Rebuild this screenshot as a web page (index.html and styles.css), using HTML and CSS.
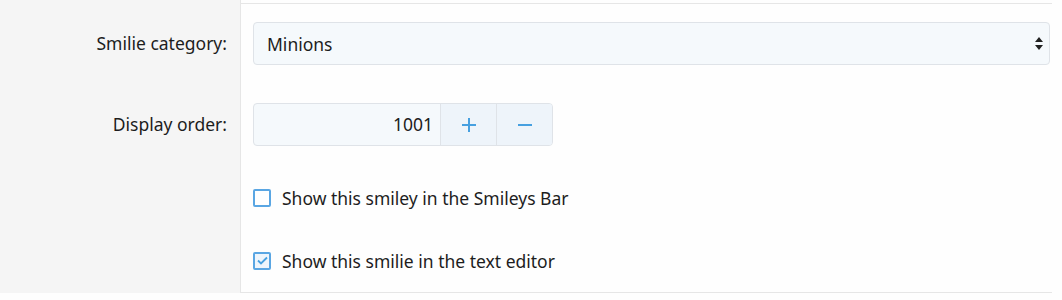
FILE: index.html
```html
<!DOCTYPE html>
<html lang="en">

<head>
  <meta charset="UTF-8">
  <meta name="viewport" content="width=device-width, initial-scale=1.0">
  <title>Smilie</title>
  <link rel="stylesheet" href="styles.css">
</head>

<body>
  <div class="form">
    <dl class="row row--top">
      <dt></dt>
      <dd></dd>
    </dl>

    <dl class="row">
      <dt><label>Smilie category:</label></dt>
      <dd>
        <div class="select">
          <span>Minions</span>
          <svg class="select__arrow" width="8" height="13" viewBox="0 0 8 13">
            <path d="M4 0 L8 5 L0 5 Z M0 8 L8 8 L4 13 Z" fill="#222"/>
          </svg>
        </div>
      </dd>
    </dl>

    <dl class="row">
      <dt><label>Display order:</label></dt>
      <dd>
        <div class="spin">
          <span class="spin__value">1001</span>
          <span class="spin__btn">
            <svg width="16" height="16" viewBox="0 0 16 16"><path d="M8 1 V15 M1 8 H15" stroke="#47a0e0" stroke-width="2"/></svg>
          </span>
          <span class="spin__btn">
            <svg width="16" height="16" viewBox="0 0 16 16"><path d="M1 8 H15" stroke="#47a0e0" stroke-width="2"/></svg>
          </span>
        </div>
      </dd>
    </dl>

    <dl class="row row--last">
      <dt></dt>
      <dd>
        <ul class="checks">
          <li>
            <span class="box"></span>
            <span>Show this smiley in the Smileys Bar</span>
          </li>
          <li>
            <span class="box box--on">
              <svg width="11" height="9" viewBox="0 0 11 9"><path d="M1 4.5 L4 7.5 L10 1.5" fill="none" stroke="#47a0e0" stroke-width="1.8"/></svg>
            </span>
            <span>Show this smilie in the text editor</span>
          </li>
        </ul>
      </dd>
    </dl>
  </div>
</body>

</html>
```

FILE: styles.css
```css
body {
  margin: 0;
  background: #fefefe;
  font-family: "Noto Sans", "Open Sans", sans-serif;
  font-size: 17.5px;
  color: #1d1d1d;
}

.form {
  width: 1052px;
}

.row {
  display: flex;
  margin: 0;
}

.row dt {
  width: 227px;
  padding: 18px 13px 0 0;
  background: #f5f5f5;
  border-right: 1px solid #e6e6e6;
  text-align: right;
  line-height: 43px;
}

.row dd {
  flex: 1;
  margin: 0;
  padding: 18px 2px 20px 12px;
  border-bottom: 1px solid #e6e6e6;
}

.row + .row dd {
  border-bottom: 0;
}

.row--top dt {
  padding: 0 13px 0 0;
}

.row--top dd {
  height: 3px;
  padding: 0;
}

.row + .row--last dd {
  border-bottom: 1px solid #e6e6e6;
  padding-top: 0;
  padding-bottom: 0;
}

/* select */
.select {
  display: flex;
  align-items: center;
  justify-content: space-between;
  height: 41px;
  padding: 0 6px 0 13px;
  background: #f5f9fc;
  border: 1px solid #dfe3e8;
  border-radius: 4px;
}

.select__arrow {
  display: block;
}

/* number input */
.spin {
  display: inline-flex;
  width: 298px;
  height: 41px;
  background: #f5f9fc;
  border: 1px solid #dfe3e8;
  border-radius: 4px;
  overflow: hidden;
}

.spin__value {
  flex: 1;
  text-align: right;
  padding-right: 7px;
  line-height: 41px;
}

.spin__btn {
  width: 55px;
  display: flex;
  align-items: center;
  justify-content: center;
  background: #eef4fa;
  border-left: 1px solid #dfe3e8;
}

/* checkboxes */
.checks {
  list-style: none;
  margin: 0;
  padding: 0;
}

.checks li {
  display: flex;
  align-items: center;
  gap: 11px;
  height: 63px;
}

.box {
  width: 14px;
  height: 14px;
  border: 2px solid #5aa6e3;
  border-radius: 2px;
  background: #fff;
  display: flex;
  align-items: center;
  justify-content: center;
}

.box--on {
  background: #eef5fc;
}
```
